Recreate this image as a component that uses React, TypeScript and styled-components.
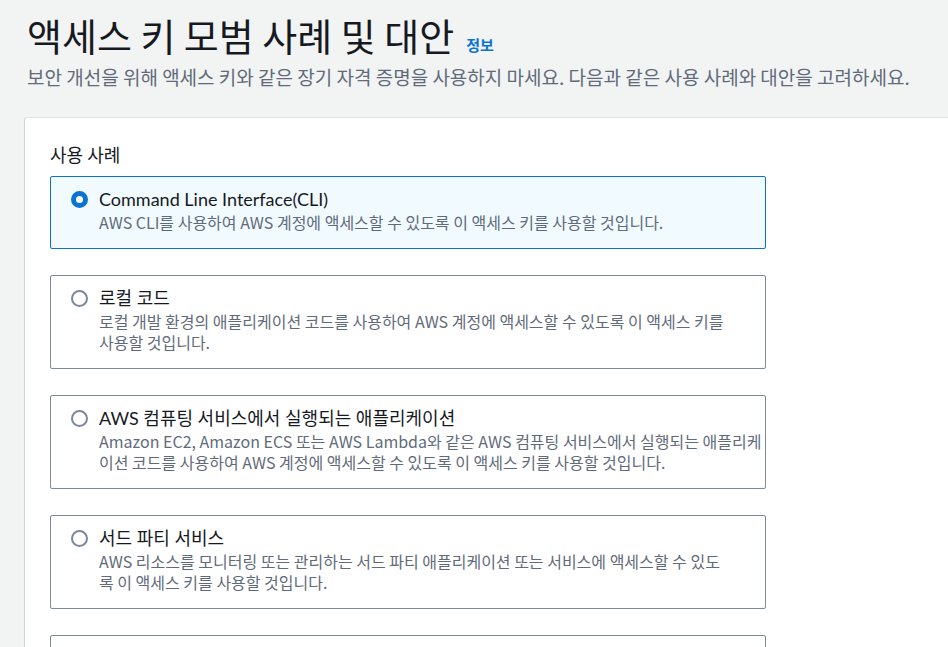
import styled, { createGlobalStyle } from 'styled-components';

const GlobalStyle = createGlobalStyle`
    html, body {
        margin: 0;
        padding: 0;
        background: #f2f3f3;
        overflow: hidden;
    }
    body {
        font-family: "Noto Sans CJK KR", "Noto Sans", sans-serif;
        color: #16191f;
    }
`;

const Page = styled.div`
    padding: 13px 0 0 25px;
    width: 948px;
    box-sizing: border-box;
`;

const Header = styled.header`
    padding-left: 2px;
`;

const TitleRow = styled.div`
    display: flex;
    align-items: baseline;
    gap: 12px;
`;

const Title = styled.h1`
    margin: 0;
    font-size: 38px;
    font-weight: 400;
    line-height: 44px;
    color: #16191f;
`;

const InfoLink = styled.a`
    font-size: 15px;
    font-weight: 700;
    color: #0972d3;
    text-decoration: none;
`;

const Subtitle = styled.p`
    margin: 7px 0 0;
    font-size: 19px;
    line-height: 26px;
    color: #5f6b7a;
`;

const Panel = styled.section`
    margin-top: 28px;
    width: calc(100% + 20px);
    background: #fff;
    border-radius: 2px 0 0 0;
    box-shadow: -1px 0 1px rgba(0, 28, 36, 0.15), 0 -1px 1px rgba(0, 28, 36, 0.05);
    padding: 23px 0 0 25px;
    box-sizing: border-box;
    min-height: 560px;
`;

const FieldLabel = styled.div`
    font-size: 18px;
    line-height: 26px;
    color: #16191f;
    margin-bottom: 9px;
`;

const CardList = styled.div`
    display: flex;
    flex-direction: column;
    gap: 26px;
    width: 716px;
`;

const Card = styled.label<{ $selected?: boolean }>`
    display: flex;
    gap: 11px;
    padding: 10px 8px 15px 20px;
    border: 1px solid ${({ $selected }) => ($selected ? '#0972d3' : '#7d8998')};
    background: ${({ $selected }) => ($selected ? '#f1faff' : '#fff')};
    border-radius: 2px;
    cursor: pointer;
`;

const Radio = styled.span<{ $checked?: boolean }>`
    flex: none;
    width: 17px;
    height: 17px;
    margin-top: 4px;
    box-sizing: border-box;
    border-radius: 50%;
    border: ${({ $checked }) => ($checked ? '5.5px solid #0972d3' : '2px solid #7d8998')};
    background: #fff;
`;

const CardText = styled.div`
    display: flex;
    flex-direction: column;
    min-width: 0;
`;

const CardTitle = styled.div`
    font-family: "Lato", "Noto Sans CJK KR", sans-serif;
    font-size: 18px;
    line-height: 24px;
    color: #16191f;
`;

const CardDesc = styled.div`
    margin-top: 1px;
    font-size: 16px;
    line-height: 21px;
    color: #5f6b7a;
    white-space: pre;
`;

const options = [
    {
        title: 'Command Line Interface(CLI)',
        desc: 'AWS CLI를 사용하여 AWS 계정에 액세스할 수 있도록 이 액세스 키를 사용할 것입니다.',
        selected: true,
    },
    {
        title: '로컬 코드',
        desc: '로컬 개발 환경의 애플리케이션 코드를 사용하여 AWS 계정에 액세스할 수 있도록 이 액세스 키를\n사용할 것입니다.',
    },
    {
        title: 'AWS 컴퓨팅 서비스에서 실행되는 애플리케이션',
        desc: 'Amazon EC2, Amazon ECS 또는 AWS Lambda와 같은 AWS 컴퓨팅 서비스에서 실행되는 애플리케\n이션 코드를 사용하여 AWS 계정에 액세스할 수 있도록 이 액세스 키를 사용할 것입니다.',
    },
    {
        title: '서드 파티 서비스',
        desc: 'AWS 리소스를 모니터링 또는 관리하는 서드 파티 애플리케이션 또는 서비스에 액세스할 수 있도\n록 이 액세스 키를 사용할 것입니다.',
    },
    {
        title: 'AWS 외부에서 실행되는 애플리케이션',
        desc: '데이터 센터의 인프라에서 실행되는 워크로드를 인증하기 위해 이 액세스 키를 사용할 것입니다.',
    },
];

const App = () => (
    <Page>
        <GlobalStyle />
        <Header>
            <TitleRow>
                <Title>액세스 키 모범 사례 및 대안</Title>
                <InfoLink href="#">정보</InfoLink>
            </TitleRow>
            <Subtitle>
                보안 개선을 위해 액세스 키와 같은 장기 자격 증명을 사용하지 마세요. 다음과 같은 사용 사례와 대안을 고려하세요.
            </Subtitle>
        </Header>
        <Panel>
            <FieldLabel>사용 사례</FieldLabel>
            <CardList>
                {options.map((o) => (
                    <Card key={o.title} $selected={o.selected}>
                        <Radio $checked={o.selected} />
                        <CardText>
                            <CardTitle>{o.title}</CardTitle>
                            <CardDesc>{o.desc}</CardDesc>
                        </CardText>
                    </Card>
                ))}
            </CardList>
        </Panel>
    </Page>
);

export default App;
